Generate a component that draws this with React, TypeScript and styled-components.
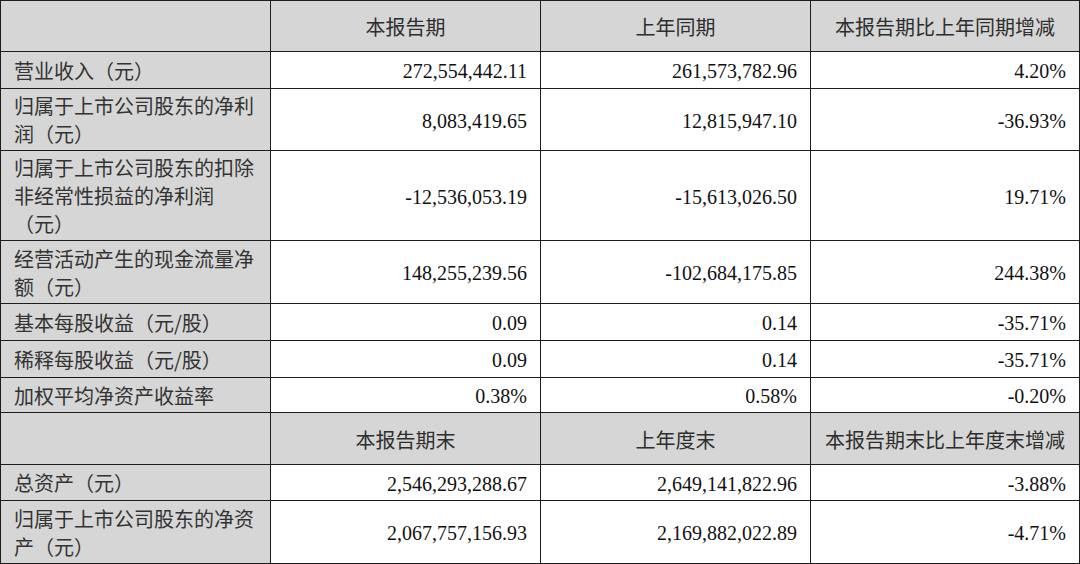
import styled, { createGlobalStyle } from "styled-components";

const GlobalStyle = createGlobalStyle`
  html, body {
    margin: 0;
    padding: 0;
    background: #ffffff;
  }
`;

type Line = { label: string; cur: string; prev: string; change: string; h: number };

const HEAD_1 = ["本报告期", "上年同期", "本报告期比上年同期增减"];
const HEAD_2 = ["本报告期末", "上年度末", "本报告期末比上年度末增减"];

const PERIOD: Line[] = [
  { label: "营业收入（元）", cur: "272,554,442.11", prev: "261,573,782.96", change: "4.20%", h: 37 },
  { label: "归属于上市公司股东的净利润（元）", cur: "8,083,419.65", prev: "12,815,947.10", change: "-36.93%", h: 62 },
  {
    label: "归属于上市公司股东的扣除非经常性损益的净利润（元）",
    cur: "-12,536,053.19",
    prev: "-15,613,026.50",
    change: "19.71%",
    h: 90,
  },
  { label: "经营活动产生的现金流量净额（元）", cur: "148,255,239.56", prev: "-102,684,175.85", change: "244.38%", h: 63 },
  { label: "基本每股收益（元/股）", cur: "0.09", prev: "0.14", change: "-35.71%", h: 37 },
  { label: "稀释每股收益（元/股）", cur: "0.09", prev: "0.14", change: "-35.71%", h: 37 },
  { label: "加权平均净资产收益率", cur: "0.38%", prev: "0.58%", change: "-0.20%", h: 35 },
];

const BALANCE: Line[] = [
  { label: "总资产（元）", cur: "2,546,293,288.67", prev: "2,649,141,822.96", change: "-3.88%", h: 36 },
  { label: "归属于上市公司股东的净资产（元）", cur: "2,067,757,156.93", prev: "2,169,882,022.89", change: "-4.71%", h: 63 },
];

const App = () => {
  const renderHead = (titles: string[], h: number) => (
    <Row $h={h}>
      <LabelCell />
      {titles.map((t) => (
        <HeadCell key={t}>{t}</HeadCell>
      ))}
    </Row>
  );

  const renderLine = (l: Line) => (
    <Row $h={l.h} key={l.label}>
      <LabelCell>
        <span>{l.label}</span>
      </LabelCell>
      <NumCell>{l.cur}</NumCell>
      <NumCell>{l.prev}</NumCell>
      <NumCell>{l.change}</NumCell>
    </Row>
  );

  return (
    <>
      <GlobalStyle />
      <Table>
        {renderHead(HEAD_1, 51)}
        {PERIOD.map(renderLine)}
        {renderHead(HEAD_2, 52)}
        {BALANCE.map(renderLine)}
      </Table>
    </>
  );
};

const Table = styled.div`
  width: 1080px;
  box-sizing: border-box;
  border-left: 1px solid #1c1c1c;
  border-top: 1px solid #1c1c1c;
  display: flex;
  flex-direction: column;
`;

const Row = styled.div<{ $h: number }>`
  display: grid;
  grid-template-columns: 270px 270px 270px 269px;
  height: ${(p) => p.$h}px;
`;

const Cell = styled.div`
  box-sizing: border-box;
  border-right: 1px solid #1c1c1c;
  border-bottom: 1px solid #1c1c1c;
  display: flex;
  align-items: center;
  padding: 0 13px 0 13px;
  font-size: 20px;
  line-height: 28px;
  min-width: 0;
`;

const LabelCell = styled(Cell)`
  background: #d6d6d6;
  color: #333333;
  font-family: "Noto Sans CJK SC", "Liberation Serif", sans-serif;
  padding-top: 1px;
`;

const HeadCell = styled(Cell)`
  background: #d6d6d6;
  color: #2e2e2e;
  justify-content: center;
  font-family: "Noto Sans CJK SC", sans-serif;
  padding-top: 2px;
`;

const NumCell = styled(Cell)`
  background: #ffffff;
  color: #111111;
  justify-content: flex-end;
  font-family: "Liberation Serif", "Times New Roman", serif;
  padding-top: 2px;
`;

export default App;
